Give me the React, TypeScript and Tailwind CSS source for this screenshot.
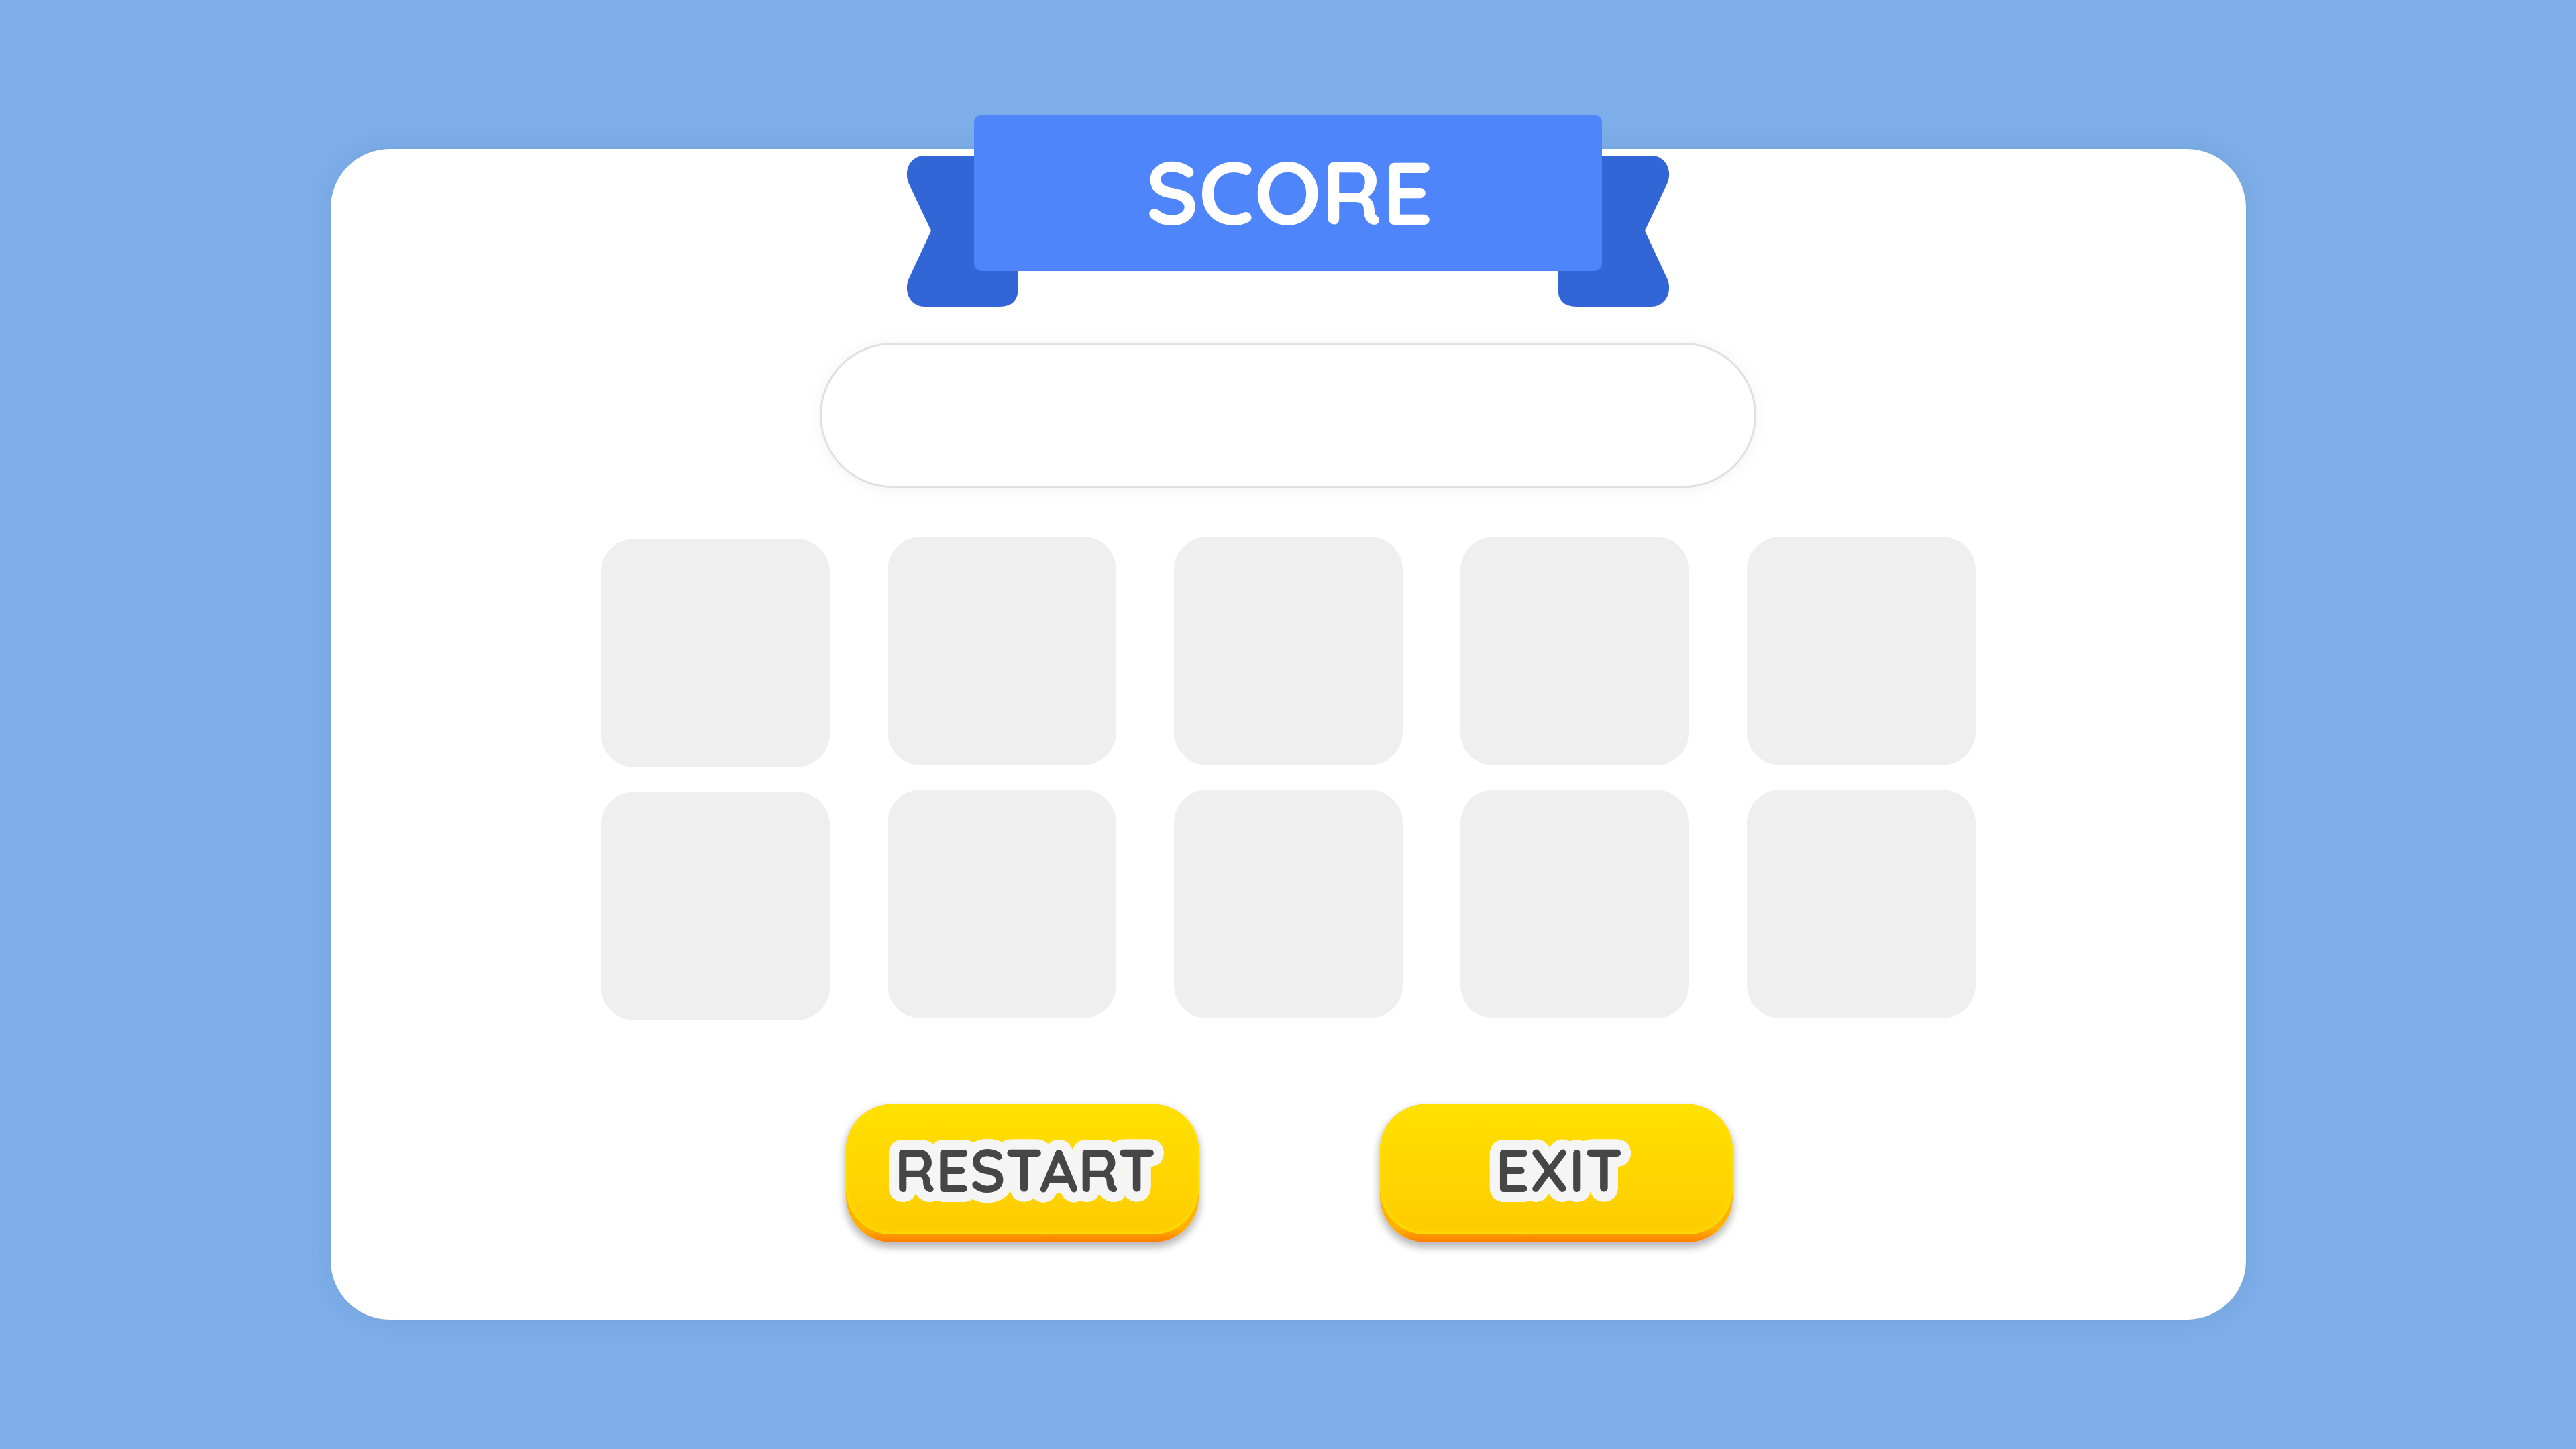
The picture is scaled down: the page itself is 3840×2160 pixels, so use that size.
import React from "react";

const ring = (radius: number, color: string, steps: number) =>
  Array.from({ length: steps }, (_, i) => {
    const angle = (i / steps) * Math.PI * 2;
    const x = Math.round(Math.cos(angle) * radius);
    const y = Math.round(Math.sin(angle) * radius);
    return `${x}px ${y}px 0 ${color}`;
  }).join(", ");

const labelShadow = `${ring(8, "#f5f5f5", 24)}, ${ring(15, "#f5f5f5", 48)}`;

function RibbonTail({ className }: { className: string }) {
  return (
    <svg
      aria-hidden="true"
      viewBox="0 0 167 225"
      className={className}
      fill="#3265d6"
    >
      <path d="M28 0H167V197Q167 225 139 225H28C7 225 -4 205 3 185L37 112L3 40C-4 20 7 0 28 0Z" />
    </svg>
  );
}

function GameButton({ children }: { children: React.ReactNode }) {
  return (
    <button
      type="button"
      className="w-[526px] rounded-[68px] bg-linear-to-b from-[#ffb000] from-90% to-[#ff7b00] pb-3 shadow-[0_6px_12px_2px_rgba(0,0,0,0.28)]"
    >
      <span className="flex h-[194px] items-center justify-center rounded-[68px] bg-linear-to-b from-[#ffe100] to-[#ffcb00] pl-2 shadow-[inset_0_0_6px_2px_#ffe100]">
        <span
          className="font-['Quicksand','Inter',sans-serif] text-[89px] leading-none font-bold text-[#464646]"
          style={{ textShadow: labelShadow }}
        >
          {children}
        </span>
      </span>
    </button>
  );
}

const columns = [0, 1, 2, 3, 4];

export default function App() {
  return (
    <main className="flex min-h-screen flex-col items-center bg-[#7daee9] px-24 pt-[222px] pb-[193px]">
      <section className="flex w-full max-w-[2855px] grow flex-col items-center rounded-[88px] bg-white pb-[115px] shadow-[0_0_36px_rgba(0,0,0,0.07)]">
        <header className="relative isolate -mt-[51px] w-[936px]">
          <RibbonTail className="absolute top-[61px] -left-[101px] -z-10 w-[167px]" />
          <RibbonTail className="absolute top-[61px] -right-[101px] -z-10 w-[167px] -scale-x-100" />
          <div className="flex h-[233px] items-center justify-center rounded-xl bg-[#4f85fb] pb-1 pl-1">
            <h1 className="font-['Quicksand','Inter',sans-serif] text-[132px] leading-none font-bold text-white">
              SCORE
            </h1>
          </div>
        </header>

        <input
          type="text"
          readOnly
          aria-label="Score"
          className="mt-[107px] h-[216px] w-[1396px] rounded-full border-3 border-[#e0e0e0] bg-white px-24 text-center text-[80px] shadow-[0_2px_24px_rgba(0,0,0,0.05)] outline-none"
        />

        <div className="mt-[73px] flex gap-[86px]">
          {columns.map((column) => (
            <div key={column} className="flex flex-col gap-9 first:pt-[3px]">
              <div className="size-[341px] rounded-[50px] bg-[#efefef]" />
              <div className="size-[341px] rounded-[50px] bg-[#efefef]" />
            </div>
          ))}
        </div>

        <div className="mt-auto flex gap-[270px] pl-1">
          <GameButton>RESTART</GameButton>
          <GameButton>EXIT</GameButton>
        </div>
      </section>
    </main>
  );
}
